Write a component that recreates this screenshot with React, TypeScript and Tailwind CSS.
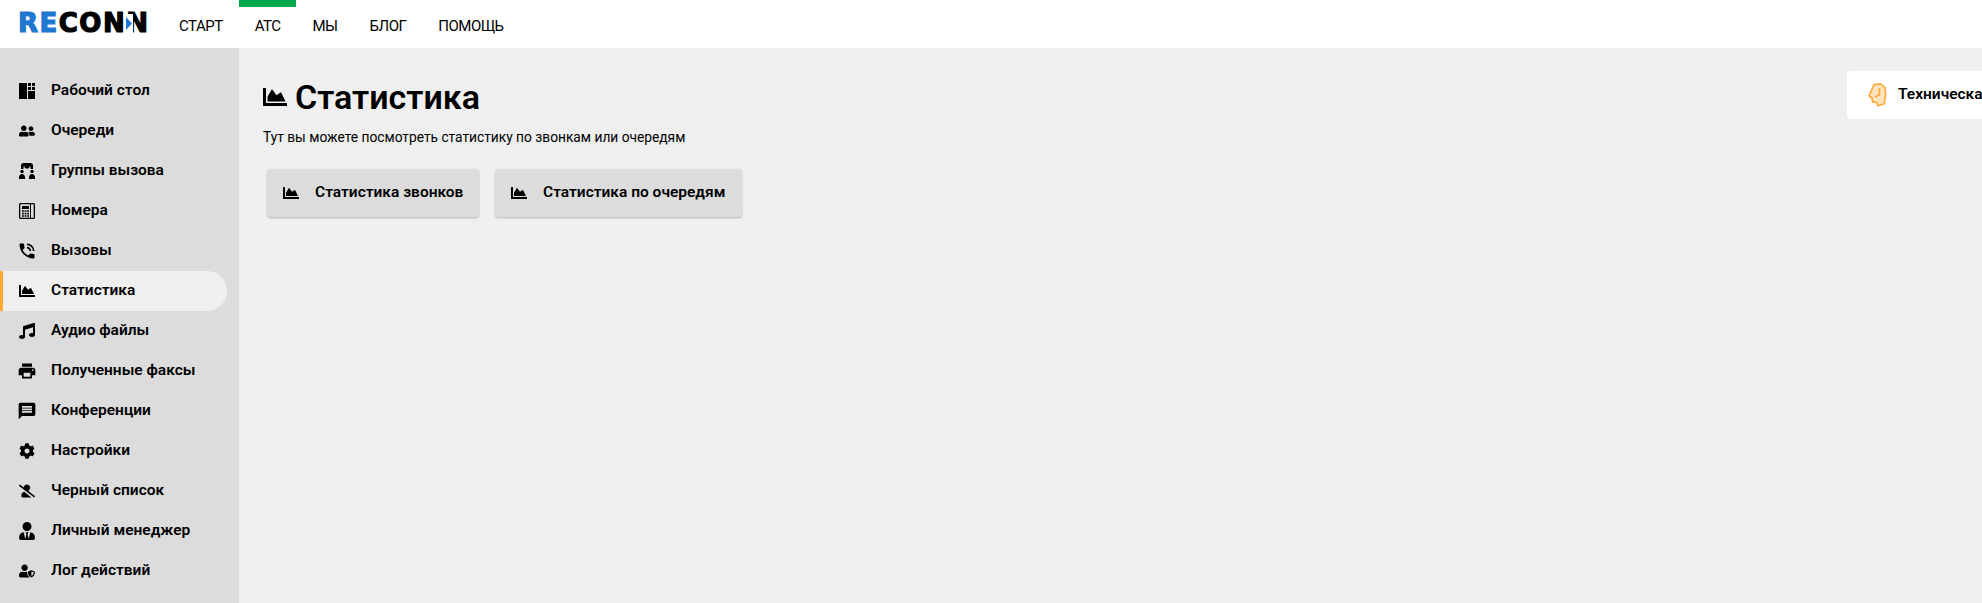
import React from 'react';
import { FaChartArea, FaCog, FaMusic, FaUserFriends, FaUserShield, FaUserSlash, FaUserTie } from 'react-icons/fa';
import { MdMessage, MdPhoneInTalk, MdPrint } from 'react-icons/md';

const DashboardIcon = () => (
  <svg viewBox="0 0 16 16" className="w-4 h-4" fill="currentColor">
    <rect x="0" y="0" width="8" height="16" />
    <rect x="9" y="0" width="3" height="3" />
    <rect x="13" y="0" width="3" height="3" />
    <rect x="9" y="4" width="3" height="3" />
    <rect x="13" y="4" width="3" height="3" />
    <rect x="9" y="8" width="7" height="8" />
  </svg>
);

const GroupCallIcon = () => (
  <svg viewBox="0 0 16 16" className="w-4 h-4" fill="currentColor">
    <path d="M2 6V2.500C2 1 3 0 4.500 0h7C13 0 14 1 14 2.500V6h-2.500V4.500c0-.8-.6-1.300-1.200-1.300H5.700c-.6 0-1.200.5-1.200 1.300V6z" />
    <circle cx="8" cy="3" r="2.600" />
    <circle cx="3" cy="8.500" r="1.700" />
    <circle cx="13" cy="8.500" r="1.700" />
    <path d="M0 16v-2c0-1.500 1.300-3 3-3s3 1.500 3 3v2zM10 16v-2c0-1.500 1.300-3 3-3s3 1.500 3 3v2z" />
  </svg>
);

const NumbersIcon = () => (
  <svg viewBox="0 0 16 16" className="w-4 h-4" fill="currentColor">
    <path fillRule="evenodd" d="M1.500 0h13C15.300 0 16 .7 16 1.500v13c0 .8-.7 1.500-1.500 1.500h-13C.7 16 0 15.300 0 14.500v-13C0 .7.700 0 1.500 0zM1.300 1.300v13.400h13.400V1.300z" />
    <rect x="11" y="1" width="1" height="14" />
    <rect x="3" y="3" width="7" height="3" />
    <rect x="3" y="7.200" width="1.800" height="1.600" />
    <rect x="5.600" y="7.200" width="1.800" height="1.600" />
    <rect x="8.200" y="7.200" width="1.800" height="1.600" />
    <rect x="3" y="9.800" width="1.800" height="1.600" />
    <rect x="5.600" y="9.800" width="1.800" height="1.600" />
    <rect x="8.200" y="9.800" width="1.800" height="1.600" />
    <rect x="3" y="12.200" width="1.800" height="1.600" />
    <rect x="5.600" y="12.200" width="1.800" height="1.600" />
    <rect x="8.200" y="12.200" width="1.800" height="1.600" />
  </svg>
);

const HeadIcon = () => (
  <svg viewBox="0 0 20 24" className="w-5 h-6">
    <path
      d="M7 1.500L14 1l4 3.500.7 7-.9 5-.3 4.200-6.500 2-1.300-3.200-4.200-.6-.6-4.200L2 13l2-4.500z"
      fill="#ffe3bd"
      stroke="#ffa733"
      strokeWidth="1.600"
      strokeLinejoin="round"
    />
    <path d="M12.500 5v6.500L8 14" fill="none" stroke="#ffa733" strokeWidth="1.600" />
  </svg>
);

const menu = [
  { label: 'Рабочий стол', icon: <DashboardIcon /> },
  { label: 'Очереди', icon: <FaUserFriends className="w-4 h-3.5" /> },
  { label: 'Группы вызова', icon: <GroupCallIcon /> },
  { label: 'Номера', icon: <NumbersIcon /> },
  { label: 'Вызовы', icon: <MdPhoneInTalk className="w-5 h-5 shrink-0" /> },
  { label: 'Статистика', icon: <FaChartArea className="w-4 h-4" />, active: true },
  { label: 'Аудио файлы', icon: <FaMusic className="w-4 h-4" /> },
  { label: 'Полученные факсы', icon: <MdPrint className="w-5 h-5 shrink-0" /> },
  { label: 'Конференции', icon: <MdMessage className="w-5 h-5 shrink-0" /> },
  { label: 'Настройки', icon: <FaCog className="w-4 h-4" /> },
  { label: 'Черный список', icon: <FaUserSlash className="w-4 h-3.5" /> },
  { label: 'Личный менеджер', icon: <FaUserTie className="w-4 h-[18px]" /> },
  { label: 'Лог действий', icon: <FaUserShield className="w-4 h-3.5" /> },
];

const nav = ['СТАРТ', 'АТС', 'МЫ', 'БЛОГ', 'ПОМОЩЬ'];

const App: React.FC = () => {
  return (
    <div className="h-screen flex flex-col overflow-hidden bg-[#efefef] text-black font-['Roboto',sans-serif]">
      <header className="h-12 shrink-0 bg-white flex items-stretch">
        <div className="relative w-[163px] pl-[18px] pt-[5px] shrink-0 text-[26px] leading-[36px] font-bold font-['DejaVu_Sans',sans-serif] tracking-[1.500px] [-webkit-text-stroke:1.200px_currentColor] whitespace-nowrap">
          <span className="text-[#1f77d0]">RE</span>
          <span>CONN</span>
          <svg viewBox="0 0 7 19" className="absolute left-[126px] top-[14px] w-[7px] h-[19px]">
            <rect width="7" height="19" fill="#fff" />
            <path d="M0 3l6 6.500L0 16z" fill="#1f77d0" />
          </svg>
        </div>
        <nav className="flex">
          {nav.map((item) => (
            <a key={item} className="relative flex items-center pt-[5px] px-4 text-[15px] tracking-[-0.5px]">
              {item === 'АТС' && <span className="absolute left-0 right-0 top-0 h-[7px] bg-[#00a94f]" />}
              {item}
            </a>
          ))}
        </nav>
      </header>
      <div className="flex-1 flex min-h-0">
        <aside className="w-[239px] shrink-0 bg-[#dcdcdc] pt-[23px] pr-3">
          {menu.map((item) => (
            <div
              key={item.label}
              className={`h-10 flex items-center gap-4 rounded-r-[20px] border-l-[3px] pl-4 text-[15.500px] font-semibold ${
                item.active ? 'bg-[#efefef] border-[#ffa733]' : 'border-transparent'
              }`}
            >
              <span className="w-4 flex justify-center shrink-0">{item.icon}</span>
              {item.label}
            </div>
          ))}
        </aside>
        <main className="flex-1 flex overflow-hidden">
          <div className="w-[1608px] shrink-0 pl-6 pt-[25px]">
            <h1 className="flex items-center gap-2 text-[34px] leading-[48px] font-semibold">
              <FaChartArea className="w-6 h-6" />
              Статистика
            </h1>
            <p className="mt-[6px] text-[13.750px] leading-5">Тут вы можете посмотреть статистику по звонкам или очередям</p>
            <div className="mt-[22px] ml-1 flex gap-4">
              <button className="h-12 w-[212px] flex items-center gap-4 px-4 rounded bg-[#dcdcdc] shadow-[0_1px_2px_rgba(0,0,0,0.25)] text-[15.500px] font-semibold whitespace-nowrap">
                <FaChartArea className="w-4 h-4 shrink-0" />
                Статистика звонков
              </button>
              <button className="h-12 w-[247px] flex items-center gap-4 px-4 rounded bg-[#dcdcdc] shadow-[0_1px_2px_rgba(0,0,0,0.25)] text-[15.500px] font-semibold whitespace-nowrap">
                <FaChartArea className="w-4 h-4 shrink-0" />
                Статистика по очередям
              </button>
            </div>
          </div>
          <div className="mt-[23px] h-12 w-[300px] shrink-0 flex items-center gap-[11px] pl-[20px] bg-white rounded text-[15.500px] font-semibold whitespace-nowrap">
            <HeadIcon />
            Техническая поддержка
          </div>
        </main>
      </div>
    </div>
  );
};

export default App;
